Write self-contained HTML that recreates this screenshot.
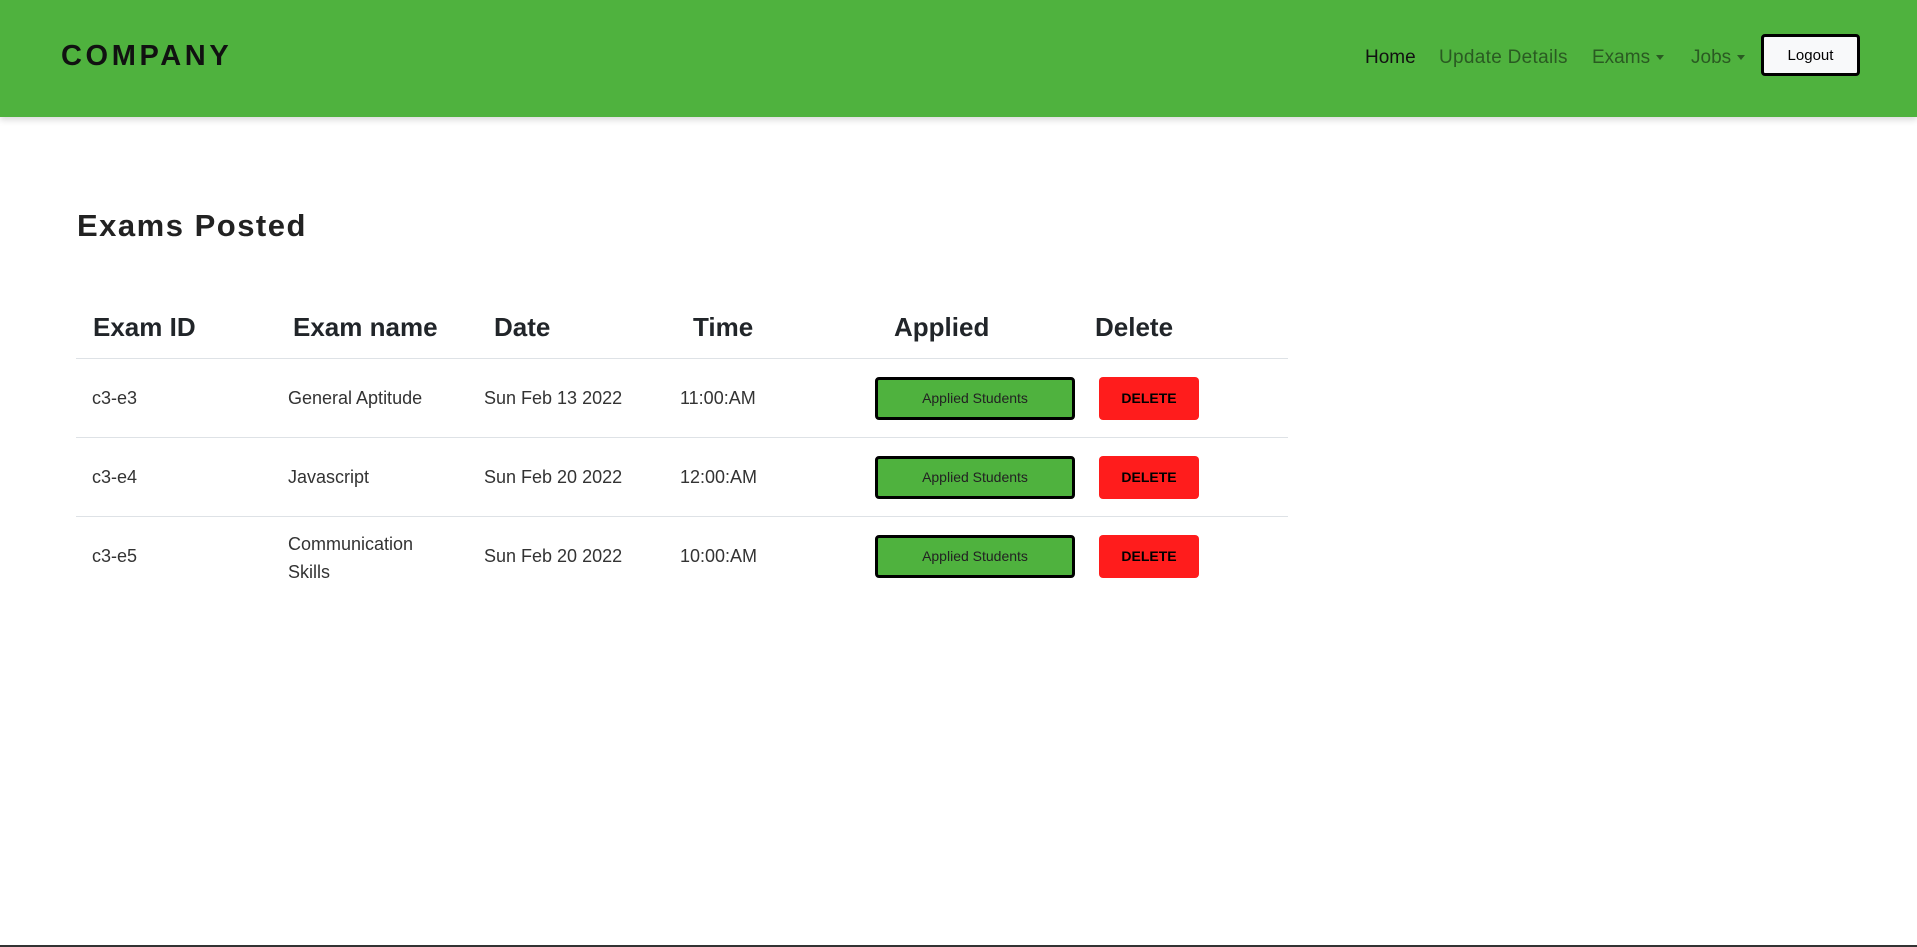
<!DOCTYPE html>
<html><head><meta charset="utf-8"><style>
body{margin:0;width:1917px;height:947px;background:#fff;font-family:"Liberation Sans",sans-serif;position:relative;overflow:hidden;color:#212529}
.nav{position:absolute;left:0;top:0;width:1917px;height:117px;background:#4fb23e;box-shadow:0 3px 6px rgba(0,0,0,.15)}
.a{position:absolute;white-space:nowrap}
.brand{left:61px;top:40px;font-size:29px;font-weight:bold;letter-spacing:3.6px;color:#111}
.nl{top:47px;font-size:19px;color:#2a5a22}
.car{display:inline-block;border-top:5px solid #2a5a22;border-left:4.5px solid transparent;border-right:4.5px solid transparent;vertical-align:middle;margin-left:6px}
.logout{left:1761px;top:34px;width:93px;height:36px;border:3px solid #000;border-radius:4px;background:#f8f9fa;font-size:15px;text-align:center;line-height:38px;color:#000}
h1{position:absolute;left:77px;top:208px;margin:0;font-size:31px;letter-spacing:1.5px;font-weight:bold;color:#222}
.th{top:312px;font-size:26px;font-weight:bold;color:#212529}
.line{position:absolute;left:76px;width:1212px;height:1px;background:#dee2e6}
.td{font-size:18px;color:#333}
.ab{position:absolute;left:875px;width:194px;height:37px;border:3px solid #000;border-radius:4px;background:#4fb23e;font-size:14px;text-align:center;line-height:37px;color:#222}
.del{position:absolute;left:1099px;width:100px;height:43px;border-radius:4px;background:#ff1c1c;font-size:14px;font-weight:bold;text-align:center;line-height:43px;color:#000}
</style></head><body>
<div class="nav"></div>
<div class="a brand">COMPANY</div>
<div class="a nl" style="left:1365px;color:#111">Home</div>
<div class="a nl" style="left:1439px;letter-spacing:0.3px">Update Details</div>
<div class="a nl" style="left:1592px">Exams<span class="car"></span></div>
<div class="a nl" style="left:1691px">Jobs<span class="car"></span></div>
<div class="a logout">Logout</div>
<h1>Exams Posted</h1>
<div class="a th" style="left:93px">Exam ID</div>
<div class="a th" style="left:293px">Exam name</div>
<div class="a th" style="left:494px">Date</div>
<div class="a th" style="left:693px">Time</div>
<div class="a th" style="left:894px">Applied</div>
<div class="a th" style="left:1095px">Delete</div>
<div class="line" style="top:358px"></div>
<div class="line" style="top:437px"></div>
<div class="line" style="top:516px"></div>

<div class="a td" style="left:92px;top:388px">c3-e3</div>
<div class="a td" style="left:288px;top:388px">General Aptitude</div>
<div class="a td" style="left:484px;top:388px">Sun Feb 13 2022</div>
<div class="a td" style="left:680px;top:388px">11:00:AM</div>
<div class="ab" style="top:377px">Applied Students</div>
<div class="del" style="top:377px">DELETE</div>

<div class="a td" style="left:92px;top:467px">c3-e4</div>
<div class="a td" style="left:288px;top:467px">Javascript</div>
<div class="a td" style="left:484px;top:467px">Sun Feb 20 2022</div>
<div class="a td" style="left:680px;top:467px">12:00:AM</div>
<div class="ab" style="top:456px">Applied Students</div>
<div class="del" style="top:456px">DELETE</div>

<div class="a td" style="left:92px;top:546px">c3-e5</div>
<div class="a td" style="left:288px;top:530px;line-height:28px">Communication<br>Skills</div>
<div class="a td" style="left:484px;top:546px">Sun Feb 20 2022</div>
<div class="a td" style="left:680px;top:546px">10:00:AM</div>
<div class="ab" style="top:535px">Applied Students</div>
<div class="del" style="top:535px">DELETE</div>
<div style="position:absolute;left:0;top:945px;width:1917px;height:2px;background:#333"></div>
</body></html>
